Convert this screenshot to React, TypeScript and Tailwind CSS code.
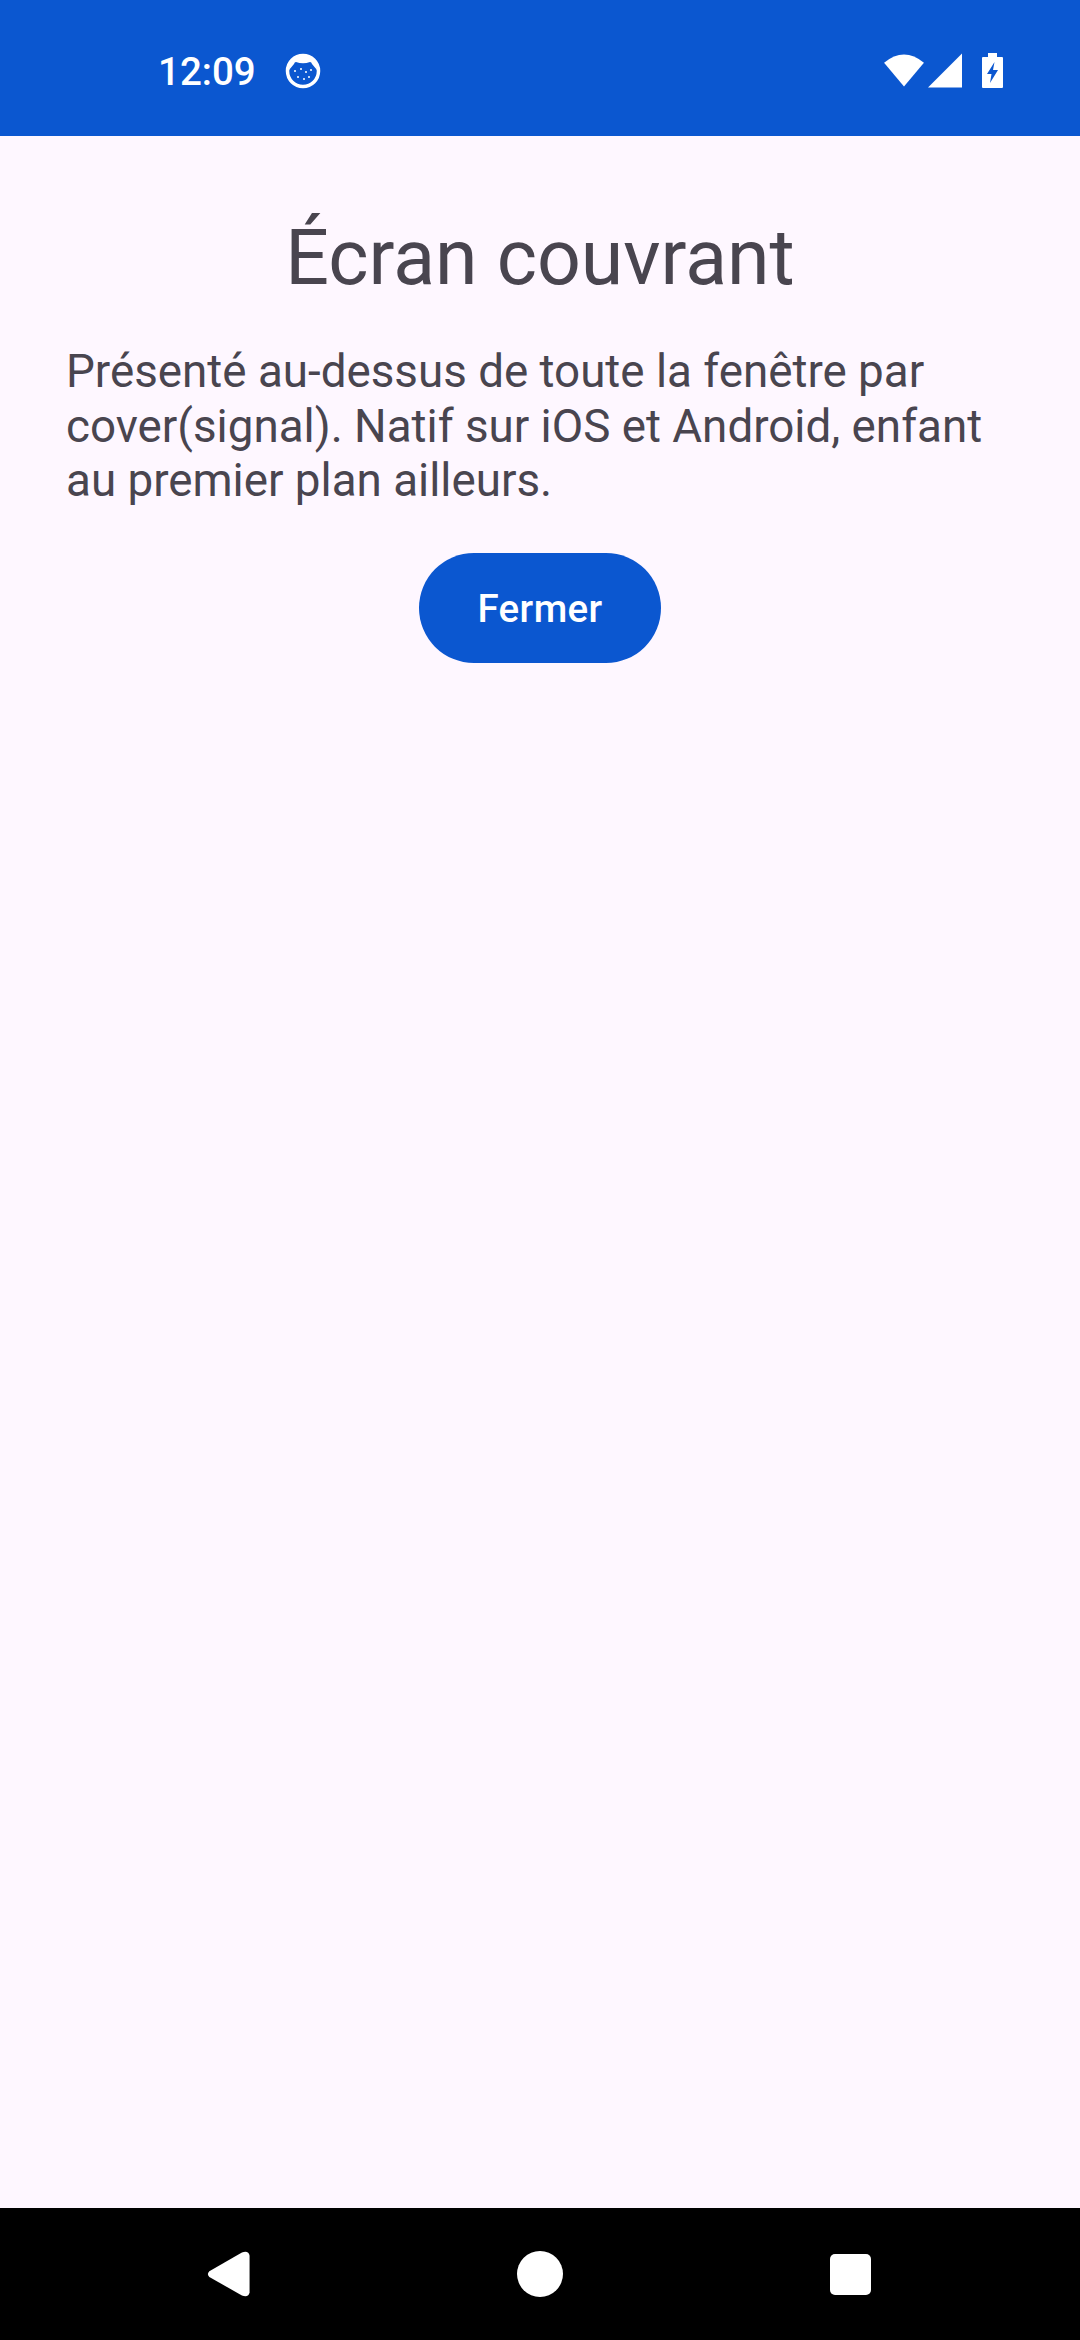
export default function App() {
  return (
    <div className="flex h-[2340px] w-[1080px] flex-col bg-[#fef7ff] font-['Roboto',sans-serif]">
      <div className="flex h-[136px] shrink-0 items-center justify-between bg-[#0b57d0] pl-[158px] pr-[77px] pt-[5px]">
        <div className="flex items-center gap-[29px]">
          <span className="mt-[3px] text-[38.5px] leading-[44px] font-medium text-white">12:09</span>
          <svg width="36" height="36" viewBox="0 0 36 36" className="mt-[1px]">
            <circle cx="18" cy="18" r="15.5" fill="none" stroke="#fff" strokeWidth="3.5" />
            <path d="M4 17 Q4 3 18 3 Q32 3 32 17 L27 11 Q26.5 9 25 9 Q18 11.5 11 9 Q9.5 9 9 11 Z" fill="#fff" />
            <g fill="#fff">
              <circle cx="10" cy="18" r="1" /><circle cx="16" cy="16" r="1" /><circle cx="21" cy="19" r="1" /><circle cx="26" cy="17" r="1" /><circle cx="13" cy="24" r="1" /><circle cx="19" cy="26" r="1" /><circle cx="24" cy="24" r="1" />
            </g>
          </svg>
        </div>
        <div className="flex items-center">
          <svg width="42" height="35" viewBox="0 0 42 36" className="mr-[3px]">
            <path d="M0.5 10 Q21 -7 41.5 10 L21 34.5 Z" fill="#fff" />
          </svg>
          <svg width="34" height="35" viewBox="0 0 34 34" className="mr-[20px]">
            <path d="M34 0 V34 H0 Z" fill="#fff" />
          </svg>
          <svg width="21" height="35" viewBox="0 0 21 35">
            <path d="M6 0 H15 V4 H20 Q21 4 21 5 V34 Q21 35 20 35 H1 Q0 35 0 34 V5 Q0 4 1 4 H6 Z" fill="#fff" />
            <path d="M12.5 9 L5 21 H9.5 L8 30 L16 17 H11 Z" fill="#0b57d0" />
          </svg>
        </div>
      </div>
      <main className="flex flex-1 flex-col items-center px-[66px] pt-[73px] text-[#49454f]">
        <h1 className="text-[77px] leading-[99px] font-normal">Écran couvrant</h1>
        <p className="mt-[37px] w-full text-[45.75px] leading-[54.5px]">
          Présenté au-dessus de toute la fenêtre par cover(signal). Natif sur iOS et Android, enfant au premier plan ailleurs.
        </p>
        <button className="mt-[44px] flex h-[110px] w-[242px] items-center justify-center rounded-[55px] bg-[#0b57d0] pt-[2px] text-[38.5px] font-medium tracking-[0.4px] text-white">
          Fermer
        </button>
      </main>
      <div className="flex h-[132px] shrink-0 items-center justify-between bg-black pl-[207px] pr-[209px]">
        <svg width="43" height="46" viewBox="0 0 44 48">
          <path d="M2 21 L36 1.5 Q43 -1 44 5 V43 Q43 49 36 46.5 L2 27 Q-1 24 2 21 Z" fill="#fff" />
        </svg>
        <span className="h-[46px] w-[46px] rounded-full bg-white" />
        <span className="h-[41px] w-[41px] rounded-[5px] bg-white" />
      </div>
    </div>
  );
}
